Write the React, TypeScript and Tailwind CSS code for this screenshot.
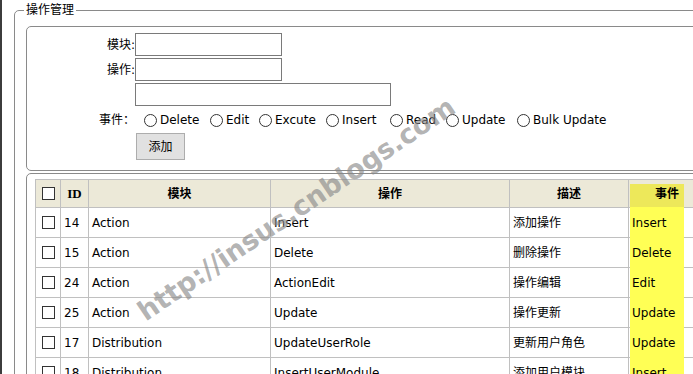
import React from "react";

const rows = [
  { id: 14, module: "Action", action: "Insert", desc: "添加操作", event: "Insert" },
  { id: 15, module: "Action", action: "Delete", desc: "删除操作", event: "Delete" },
  { id: 24, module: "Action", action: "ActionEdit", desc: "操作编辑", event: "Edit" },
  { id: 25, module: "Action", action: "Update", desc: "操作更新", event: "Update" },
  { id: 17, module: "Distribution", action: "UpdateUserRole", desc: "更新用户角色", event: "Update" },
  { id: 18, module: "Distribution", action: "InsertUserModule", desc: "添加用户模块", event: "Insert" },
];

const events = [
  { label: "Delete", w: "w-[66px]" },
  { label: "Edit", w: "w-[49px]" },
  { label: "Excute", w: "w-[67px]" },
  { label: "Insert", w: "w-[64px]" },
  { label: "Read", w: "w-[56px]" },
  { label: "Update", w: "w-[71px]" },
  { label: "Bulk Update", w: "w-auto" },
];

const Check = () => (
  <input
    type="checkbox"
    className="block h-[13px] w-[13px] appearance-none border border-[#333] bg-white mx-auto"
  />
);

export default function App() {
  return (
    <div className="relative flex h-[374px] w-[693px] overflow-hidden bg-white text-[12px] text-black font-['DejaVu_Sans','Noto_Sans_CJK_SC',sans-serif]">
      <div className="w-[2px] shrink-0 bg-[#3c3c3c]" />

      <div className="shrink-0 pl-[12px] pt-[3px]">
        <fieldset className="w-[720px] rounded-[5px] border border-[#8a8a8a] pl-[11px]">
          <legend className="-ml-[2px] px-[2px] leading-[14px]">操作管理</legend>

          {/* form */}
          <fieldset className="mt-[9px] rounded-[5px] border border-[#8a8a8a] pt-[6px] pb-[10px]">
            <div className="flex items-center">
              <label className="w-[108px] text-right">模块:</label>
              <input className="h-[23px] w-[147px] border border-[#7a7a7a] bg-white" />
            </div>
            <div className="mt-[2px] flex items-center">
              <label className="w-[108px] text-right">操作:</label>
              <input className="h-[23px] w-[147px] border border-[#7a7a7a] bg-white" />
            </div>
            <div className="mt-[2px] flex items-center">
              <div className="w-[108px]" />
              <input className="h-[23px] w-[256px] border border-[#7a7a7a] bg-white" />
            </div>
            <div className="mt-[6px] flex h-[16px] items-center">
              <span className="w-[108px] text-right">事件：</span>
              <div className="flex items-center pl-[9px]">
                {events.map((e) => (
                  <label key={e.label} className={`flex shrink-0 items-center ${e.w}`}>
                    <input
                      type="radio"
                      name="evt"
                      className="h-[13px] w-[13px] appearance-none rounded-full border border-[#333] bg-white"
                    />
                    <span className="ml-[3px] whitespace-nowrap">{e.label}</span>
                  </label>
                ))}
              </div>
            </div>
            <button className="ml-[109px] mt-[5px] h-[27px] w-[49px] border border-[#adadad] bg-[#e1e1e1]">
              添加
            </button>
          </fieldset>

          {/* grid */}
          <fieldset className="mt-[2px] rounded-[5px] border border-[#8a8a8a] pl-[8px] pt-[5px]">
            <div className="relative w-[664px]">
              <table className="w-[664px] table-fixed border-collapse">
                <colgroup>
                  <col className="w-[25px]" />
                  <col className="w-[28px]" />
                  <col className="w-[182px]" />
                  <col className="w-[239px]" />
                  <col className="w-[119px]" />
                  <col className="w-[71px]" />
                </colgroup>
                <thead>
                  <tr className="h-[28px] bg-[#ece9d8] font-bold">
                    <th className="border border-[#c0c0c0]">
                      <Check />
                    </th>
                    <th className="border border-[#c0c0c0] font-['Liberation_Serif'] text-[13px]">ID</th>
                    <th className="border border-[#c0c0c0]">模块</th>
                    <th className="border border-[#c0c0c0]">操作</th>
                    <th className="border border-[#c0c0c0]">描述</th>
                    <th className="border border-[#c0c0c0] pl-[6px]">
                      <span className="relative z-10">事件</span>
                    </th>
                  </tr>
                </thead>
                <tbody>
                  {rows.map((r) => (
                    <tr key={r.id} className="h-[30px]">
                      <td className="border border-[#c0c0c0]">
                        <Check />
                      </td>
                      <td className="border border-[#c0c0c0] px-[3px]">{r.id}</td>
                      <td className="border border-[#c0c0c0] px-[3px]">{r.module}</td>
                      <td className="border border-[#c0c0c0] px-[3px]">{r.action}</td>
                      <td className="border border-[#c0c0c0] px-[3px]">{r.desc}</td>
                      <td className="border border-[#c0c0c0] px-[3px]">
                        <span className="relative z-10">{r.event}</span>
                      </td>
                    </tr>
                  ))}
                </tbody>
              </table>
              {/* yellow highlight over the event column */}
              <div className="absolute left-[595px] top-[5px] z-0 h-[23px] w-[54px] bg-[#ede85a]" />
              <div className="absolute bottom-0 left-[595px] top-[28px] z-0 w-[54px] bg-[#ffff55]" />
            </div>
          </fieldset>
        </fieldset>
      </div>

      {/* watermark */}
      <div className="pointer-events-none absolute left-[148px] top-[298px] origin-bottom-left -rotate-[34deg] whitespace-nowrap font-['DejaVu_Sans',sans-serif] text-[27px] font-bold leading-[27px] text-[#888]/65">
        http://insus.cnblogs.com
      </div>
    </div>
  );
}
